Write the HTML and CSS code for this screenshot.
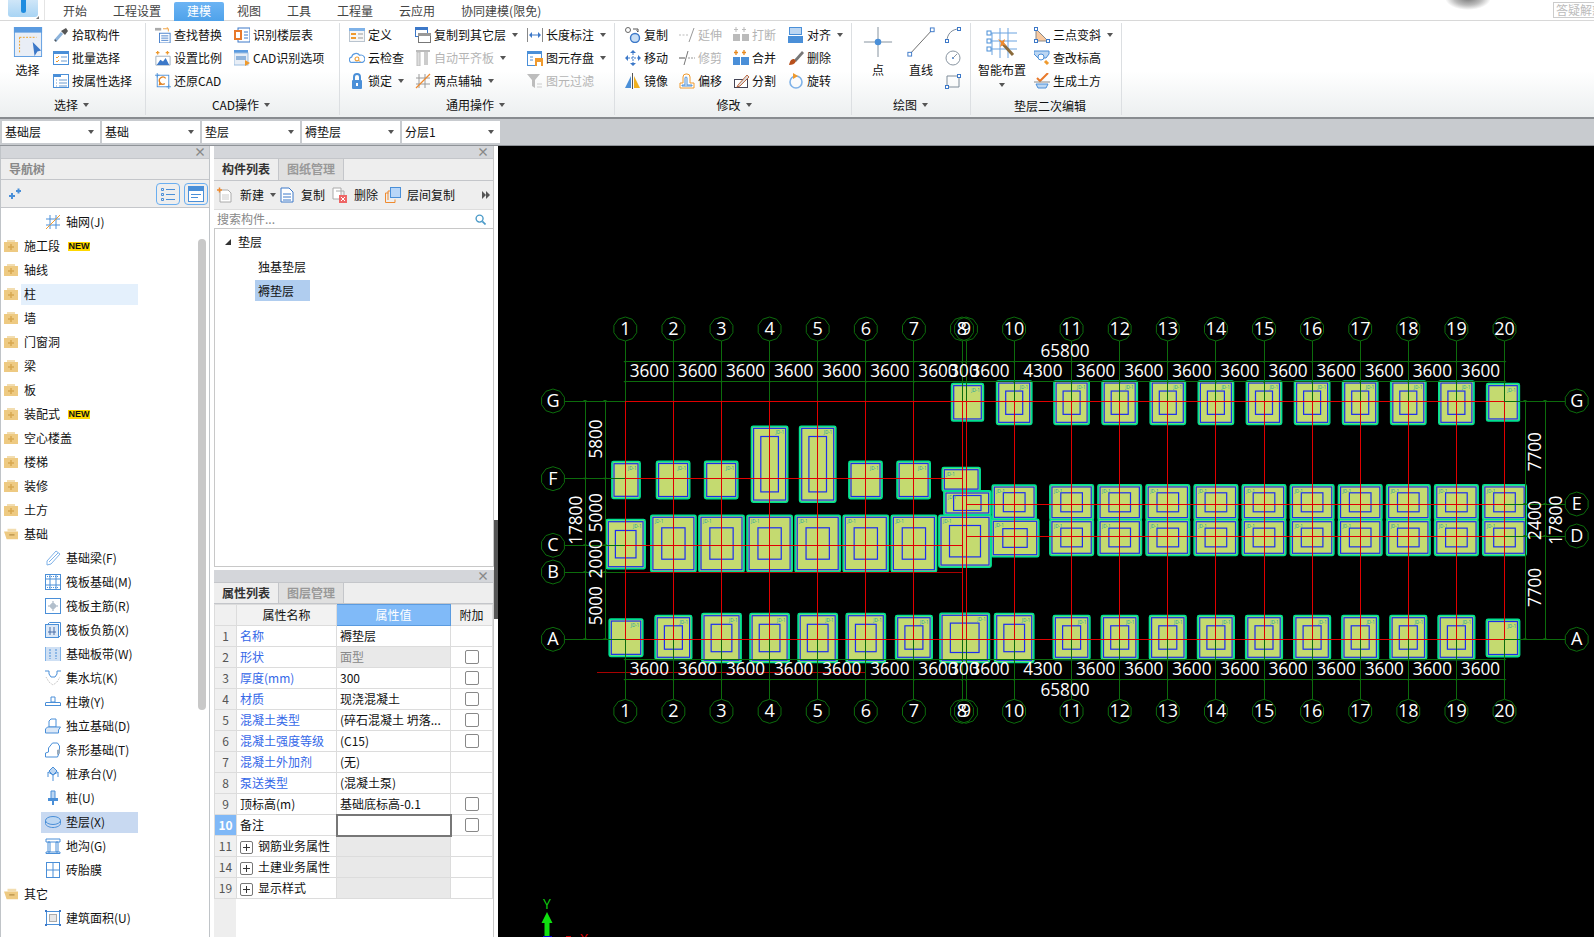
FILE: index.html
```html
<!DOCTYPE html>
<html lang="zh-CN">
<head>
<meta charset="utf-8">
<title>建模</title>
<link rel="stylesheet" href="styles.css">
</head>
<body>
<svg class="sprite" xmlns="http://www.w3.org/2000/svg">
  <symbol id="i-select" viewBox="0 0 30 32"><rect x=".5" y=".5" width="29" height="31" fill="#e9eef6" stroke="#5b9be0"/><rect width="30" height="6" fill="#5b9be0"/><path d="M6 11H24M6 11V27" fill="none" stroke="#f0a020" stroke-dasharray="2 1.5"/><path d="M20 16L29 25 25 26 22 31Z" fill="#3c78c8"/></symbol>
  <symbol id="i-pick" viewBox="0 0 16 16"><path d="M2 14L9 6" stroke="#8db4dc" stroke-width="3"/><path d="M2 14l1-1" stroke="#555" stroke-width="2"/><path d="M8 4l4 4 3-4-2-3z" fill="#555"/></symbol>
  <symbol id="i-batch" viewBox="0 0 16 16"><rect x=".5" y="1.5" width="15" height="13" fill="#fff" stroke="#4a8fd8"/><rect y="1" width="16" height="3" fill="#4a8fd8"/><path d="M3 7l1 1 2-2M3 11l1 1 2-2" fill="none" stroke="#ef9a2e"/><path d="M8 7h6M8 11h6" stroke="#6a9bd0"/></symbol>
  <symbol id="i-attr" viewBox="0 0 16 16"><rect x=".5" y="1.5" width="15" height="13" fill="#fff" stroke="#4a8fd8"/><rect y="1" width="8" height="3" fill="#4a8fd8"/><path d="M3 7h1M3 10h1M3 13h1M6 7h8M6 10h8M6 13h8" stroke="#6a9bd0"/></symbol>
  <symbol id="i-find" viewBox="0 0 18 18"><path d="M0 1h7v3H0z" fill="#aaa"/><path d="M9 2h6l-2-2m2 2v3" fill="none" stroke="#ef9a2e"/><rect x="5" y="7" width="12" height="11" fill="#fff" stroke="#3c78c8"/><path d="M7 10h8M7 12.5h8M7 15h8" stroke="#3c78c8"/></symbol>
  <symbol id="i-scale" viewBox="0 0 18 18"><path d="M1 3h4M3 1v4M12 3h4M14 1v4" stroke="#ef9a2e" stroke-width="1.5"/><path d="M1 7h16v10H1z" fill="#fff" stroke="#9ab"/><path d="M2 17L6 11 9 13 12 9 16 17z" fill="#3c78c8"/></symbol>
  <symbol id="i-restore" viewBox="0 0 18 18"><rect x="2.5" y="2.5" width="13" height="13" fill="#fff" stroke="#4a8fd8"/><path d="M0 2.5h5M13 15.5h5M2.5 0v5M15.5 13v5" stroke="#4a8fd8"/><path d="M12 6a4 4 0 1 0-1 6" fill="none" stroke="#e08020" stroke-width="1.5"/><path d="M5 10l3 3-4 1z" fill="#e08020"/></symbol>
  <symbol id="i-floor" viewBox="0 0 16 16"><rect x="4" y="1" width="12" height="14" fill="#fff" stroke="#3c78c8"/><path d="M10 5h4M10 8h4M10 11h4" stroke="#3c78c8"/><rect y="3" width="8" height="10" fill="#e8792b"/><rect x="2" y="5" width="4" height="6" fill="#fff"/></symbol>
  <symbol id="i-cadopt" viewBox="0 0 16 16"><rect width="14" height="3" fill="#5b9be0"/><rect y="3" width="14" height="12" fill="#e8eef6" stroke="#9bbde0"/><rect x="2" y="6" width="10" height="4" fill="#8fb4dc"/><path d="M11 10l5 3-5 3z" fill="#ef9a2e"/></symbol>
  <symbol id="i-def" viewBox="0 0 16 16"><rect x=".5" y="1.5" width="15" height="13" fill="#f6f6f6" stroke="#b9c4cf"/><rect y="1" width="16" height="3" fill="#7fb2e8"/><rect x="2" y="6" width="5" height="2" fill="#ef9a2e"/><rect x="2" y="10" width="5" height="2" fill="#ef9a2e"/><path d="M9 7h5M9 11h5" stroke="#999"/></symbol>
  <symbol id="i-cloud" viewBox="0 0 18 16"><path d="M4 13a3 3 0 0 1-1-6 5 5 0 0 1 9-2 4 4 0 0 1 3 8z" fill="#fff" stroke="#5b9be0" stroke-width="1.3"/><circle cx="9" cy="9" r="2.2" fill="none" stroke="#ef9a2e" stroke-width="1.2"/><path d="M11 11l2 1" stroke="#ef9a2e"/></symbol>
  <symbol id="i-lock" viewBox="0 0 16 16"><path d="M5 7V4a3 3 0 0 1 6 0v3" fill="none" stroke="#4a8fd8" stroke-width="2"/><rect x="3" y="7" width="10" height="9" rx="1" fill="#4a8fd8"/><rect x="7" y="10" width="2" height="3" fill="#fff"/></symbol>
  <symbol id="i-copyto" viewBox="0 0 16 16"><rect x=".5" y=".5" width="12" height="9" fill="#fff" stroke="#3c78c8"/><rect width="13" height="3" fill="#3c78c8"/><rect x="3.5" y="6.5" width="12" height="9" fill="#fff" stroke="#777"/><rect x="3" y="6" width="13" height="3" fill="#999"/></symbol>
  <symbol id="i-autoalign" viewBox="0 0 16 16"><path d="M1 1h14" stroke="#bbb" stroke-width="2"/><rect x="2" y="2" width="3" height="14" fill="#ddd" stroke="#bbb"/><rect x="9" y="2" width="4" height="13" fill="#ccc"/></symbol>
  <symbol id="i-2pt" viewBox="0 0 16 16"><path d="M4 1v14M10 1v14M1 5h14M1 11h14" stroke="#9a9a9a"/><path d="M1 15L15 1" stroke="#ef8a2e" stroke-width="1.3"/></symbol>
  <symbol id="i-dim" viewBox="0 0 16 16"><path d="M.5 1v14M15.5 1v14" stroke="#888"/><path d="M3 8h10" stroke="#3c78c8"/><path d="M2 8l3-3v6zM14 8l-3-3v6z" fill="#3c78c8"/></symbol>
  <symbol id="i-save" viewBox="0 0 16 16"><rect x=".5" y="1.5" width="14" height="14" fill="#fff" stroke="#4a8fd8"/><rect y="1" width="15" height="3" fill="#4a8fd8"/><path d="M3 7h3M3 10h3" stroke="#4a8fd8"/><rect x="8" y="8" width="8" height="8" fill="#ef9a2e"/><rect x="10" y="12" width="4" height="4" fill="#fff"/></symbol>
  <symbol id="i-filter" viewBox="0 0 16 16"><path d="M0 1h13L8 7v8L5 13V7z" fill="#bdbdbd"/><path d="M10 11h5M10 14h5" stroke="#ccc"/></symbol>
  <symbol id="i-copy" viewBox="0 0 16 16"><circle cx="3" cy="3" r="2.5" fill="#fff" stroke="#666"/><circle cx="10" cy="11" r="4.5" fill="#c8def5" stroke="#3c78c8" stroke-width="1.4"/><path d="M8 2h5v3M13 5l-1.500-1.500" fill="none" stroke="#555"/></symbol>
  <symbol id="i-extend" viewBox="0 0 16 16"><path d="M0 8h9" stroke="#bbb" stroke-dasharray="2 1.500"/><path d="M10 15L15 1" stroke="#999"/></symbol>
  <symbol id="i-break" viewBox="0 0 16 16"><path d="M3 0v5M1 2.500h4M11 0v5M9 2.500h4" stroke="#bbb"/><rect y="7" width="7" height="7" fill="#bbb"/><rect x="9" y="7" width="7" height="7" fill="#bbb"/></symbol>
  <symbol id="i-align" viewBox="0 0 16 16"><rect x="1.500" y=".5" width="12" height="7" fill="#bcd6f2" stroke="#4a8fd8"/><rect y="9" width="15" height="7" fill="#4a8fd8"/></symbol>
  <symbol id="i-move" viewBox="0 0 16 16"><path d="M8 0l3 3H5zM8 16l-3-3h6zM0 8l3-3v6zM16 8l-3 3V5z" fill="#3c78c8"/><path d="M8 3v10M3 8h10" stroke="#3c78c8" stroke-dasharray="2 1"/></symbol>
  <symbol id="i-trim" viewBox="0 0 16 16"><path d="M0 8h6" stroke="#555"/><path d="M9 8h7" stroke="#999" stroke-dasharray="2 1"/><path d="M5 15L9 1" stroke="#777"/></symbol>
  <symbol id="i-merge" viewBox="0 0 16 16"><path d="M3 0v5M1 2.500h4M11 0v5M9 2.500h4" stroke="#e88a20" stroke-width="1.300"/><rect y="7" width="7" height="8" fill="#4a8fd8"/><rect x="8" y="7" width="8" height="8" fill="#4a8fd8"/></symbol>
  <symbol id="i-del" viewBox="0 0 16 16"><path d="M6 10L14 1l2 2-8 9z" fill="#777"/><path d="M6 9c-3 0-4 2-5 6 3 0 6-1 7-4z" fill="#b8501c"/></symbol>
  <symbol id="i-mirror" viewBox="0 0 16 16"><path d="M6 3v12H0z" fill="#4a8fd8"/><path d="M9 3v12h6z" fill="#f0b020"/><path d="M7.500 0v16" stroke="#555"/></symbol>
  <symbol id="i-offset" viewBox="0 0 16 16"><path d="M1 15V10h3V4a3 3 0 0 1 3-3h1a3 3 0 0 1 3 3v6h4v5z" fill="#fff" stroke="#ef9a2e"/><path d="M3 13v-1h3V5a1 1 0 0 1 2 0v7h5v1z" fill="none" stroke="#4a8fd8"/></symbol>
  <symbol id="i-split" viewBox="0 0 16 16"><rect x="1.500" y="6.500" width="13" height="8" fill="#fff" stroke="#445"/><path d="M5 12L14 2l2 2-9 9-3 1z" fill="#ddd" stroke="#b04a1c" stroke-width=".8"/></symbol>
  <symbol id="i-rotate" viewBox="0 0 16 16"><circle cx="8" cy="9" r="6" fill="none" stroke="#7fb2e8" stroke-width="1.600"/><path d="M5 0l5 3-5 3z" fill="#ef9a2e"/></symbol>
  <symbol id="i-point" viewBox="0 0 30 32"><path d="M15 0v32M0 16h30" stroke="#7f8c99"/><circle cx="15" cy="16" r="3.500" fill="#4a8fd8"/></symbol>
  <symbol id="i-line" viewBox="0 0 30 32"><path d="M3 29L27 3" stroke="#666"/><rect x="1" y="27" width="4" height="4" fill="#fff" stroke="#3c78c8"/><rect x="25" y="1" width="4" height="4" fill="#fff" stroke="#3c78c8"/></symbol>
  <symbol id="i-arc" viewBox="0 0 16 16"><path d="M2 14C2 7 7 2 14 2" fill="none" stroke="#7f8c99"/><rect x=".5" y="12.500" width="3" height="3" fill="#fff" stroke="#3c78c8"/><rect x="12.500" y=".5" width="3" height="3" fill="#fff" stroke="#3c78c8"/></symbol>
  <symbol id="i-circle" viewBox="0 0 16 16"><circle cx="8" cy="8" r="7" fill="#fff" stroke="#8a96a2"/><circle cx="8" cy="8" r="1" fill="#3c78c8"/><path d="M8 8l4-4" stroke="#8a96a2"/></symbol>
  <symbol id="i-rect" viewBox="0 0 16 16"><path d="M2 3h12v11H2z" fill="none" stroke="#7f8c99"/><rect x=".5" y="12.500" width="3" height="3" fill="#fff" stroke="#3c78c8"/><rect x="12.500" y="1.500" width="3" height="3" fill="#fff" stroke="#3c78c8"/></symbol>
  <symbol id="i-smart" viewBox="0 0 32 32"><path d="M6 6v22M14 1v30M22 1v30M1 6h30M1 14h30M1 22h30" stroke="#6aa3e0"/><rect x="1" y="4" width="4" height="4" fill="#fff" stroke="#4a8fd8"/><rect x="1" y="12" width="4" height="4" fill="#fff" stroke="#4a8fd8"/><rect x="1" y="20" width="4" height="4" fill="#fff" stroke="#4a8fd8"/><path d="M16 16l11 12" stroke="#8a6a3a" stroke-width="3"/><path d="M12 12l4 2 3-2-1 4 3 3-4-1-3 2 1-4z" fill="#ef8a2e"/></symbol>
  <symbol id="i-3pt" viewBox="0 0 16 16"><path d="M2 2l12 12H2z" fill="#f8c9a0" stroke="#888"/><rect x=".5" y=".5" width="3" height="3" fill="#fff" stroke="#3c78c8"/><rect x=".5" y="12.500" width="3" height="3" fill="#fff" stroke="#3c78c8"/><rect x="12.500" y="12.500" width="3" height="3" fill="#fff" stroke="#3c78c8"/></symbol>
  <symbol id="i-elev" viewBox="0 0 16 16"><path d="M0 1h15v3l-3 4H4L0 4z" fill="#bcd6f2" stroke="#4a8fd8"/><circle cx="7" cy="7" r="3" fill="#fff" stroke="#4a8fd8"/><path d="M11 11l3 3" stroke="#ef9a2e" stroke-width="3"/></symbol>
  <symbol id="i-earth" viewBox="0 0 16 16"><path d="M3 5l3 3 8-8" fill="none" stroke="#e8792b" stroke-width="2"/><path d="M0 9h16" stroke="#888"/><path d="M2 11h12l-2 4H4z" fill="#bcd6f2" stroke="#4a8fd8"/></symbol>
  <symbol id="i-folder" viewBox="0 0 14 14"><path d="M3 1h8v2H3z" fill="#f2ddb0"/><rect y="3" width="14" height="10" fill="#eeca82"/><path d="M7 5v6M4 8h6" stroke="#d8a850" stroke-width="1.500"/></symbol>
  <symbol id="i-folder-open" viewBox="0 0 16 14"><path d="M4 1h10v3H4z" fill="#f2ddb0"/><path d="M0 4h16v9H3z" fill="#eeca82"/><path d="M6 8h6" stroke="#b9924a" stroke-width="1.500"/></symbol>
  <symbol id="t-grid" viewBox="0 0 16 16"><path d="M5 1v14M11 1v14M1 5h14M1 11h14" stroke="#4a8fd8"/><path d="M1 15L15 1" stroke="#ef9a2e"/></symbol>
  <symbol id="t-beam" viewBox="0 0 16 16"><path d="M2 11L11 1l4 3-9 10-4 1z" fill="#fff" stroke="#7fb2e8"/><path d="M4 12L13 3" stroke="#7fb2e8"/></symbol>
  <symbol id="t-raft" viewBox="0 0 16 16"><rect x=".5" y=".5" width="15" height="15" fill="#fff" stroke="#4a8fd8"/><path d="M.5 5h15M.5 11h15M5 .5v15M11 .5v15" stroke="#4a8fd8"/><path d="M2 2.500h12M2 13.500h12" stroke="#4a8fd8" stroke-dasharray="1 1"/></symbol>
  <symbol id="t-main" viewBox="0 0 16 16"><rect x=".5" y=".5" width="15" height="15" fill="#fff" stroke="#4a8fd8"/><path d="M8 3v10M3 8h10" stroke="#9ab"/><path d="M6 6h4v4H6z" fill="none" stroke="#9ab"/></symbol>
  <symbol id="t-neg" viewBox="0 0 16 16"><rect x=".5" y="2.500" width="13" height="13" fill="#dbe8f7" stroke="#4a8fd8"/><path d="M2.500 2.500l2-2h11v13l-2 2" fill="none" stroke="#4a8fd8"/><path d="M5 5v8M9 5v8M3 10h8" stroke="#4a6fa8"/></symbol>
  <symbol id="t-strip" viewBox="0 0 16 16"><rect y="1" width="16" height="14" fill="#cfe0f4"/><path d="M.5 1v14M15.500 1v14" stroke="#7fb2e8"/><path d="M5 3v10M11 3v10" stroke="#4a8fd8" stroke-dasharray="2 1"/></symbol>
  <symbol id="t-sump" viewBox="0 0 16 16"><path d="M0 1h4v3l2 3h4l2-3V1h4" fill="none" stroke="#4a8fd8"/><path d="M1 7l3 5 4 3 4-3 3-5" fill="none" stroke="#bbb" stroke-dasharray="1 1"/></symbol>
  <symbol id="t-pier" viewBox="0 0 16 16"><path d="M6 3h4v5H6z" fill="#fff" stroke="#4a8fd8"/><path d="M1 8.500h14M0 11.500h16" stroke="#4a8fd8"/><path d="M.5 8.500v3M15.500 8.500v3" stroke="#4a8fd8"/></symbol>
  <symbol id="t-iso" viewBox="0 0 16 16"><path d="M4 3l2-2h5v8H4z" fill="#fff" stroke="#4a8fd8"/><path d="M.5 15V11l2-2h13l-2 3v3z" fill="#dbe8f7" stroke="#4a8fd8"/></symbol>
  <symbol id="t-bar" viewBox="0 0 16 16"><path d="M.5 15v-4l3-1V6l4-5h5l2 3v6l-2 5z" fill="#fff" stroke="#4a8fd8"/><path d="M12 8l3-1v4l-3 2z" fill="#9ab"/></symbol>
  <symbol id="t-cap" viewBox="0 0 16 16"><path d="M8 1l4 4-4 4-4-4z" fill="#bcd6f2" stroke="#4a8fd8"/><path d="M3 6v5M13 6v5M8 9v6M3 6l5 3 5-3" fill="none" stroke="#4a8fd8"/></symbol>
  <symbol id="t-pile" viewBox="0 0 16 16"><path d="M6 1h4v8H6z" fill="#bcd6f2" stroke="#4a8fd8"/><path d="M3 8h10v3H3z" fill="#4a8fd8"/><path d="M8 11v4" stroke="#4a8fd8" stroke-width="2"/></symbol>
  <symbol id="t-cushion" viewBox="0 0 16 12"><ellipse cx="8" cy="4.500" rx="7.500" ry="4" fill="#bcd6f2" stroke="#4a8fd8"/><path d="M.5 4.500v3c0 2 3.500 4 7.500 4s7.500-2 7.500-4v-3" fill="none" stroke="#4a8fd8"/></symbol>
  <symbol id="t-trench" viewBox="0 0 16 16"><path d="M1 1h14v3H1zM3 4h2v10H3zM11 4h2v10h-2zM1 14h14v1.500H1z" fill="#fff" stroke="#4a8fd8"/></symbol>
  <symbol id="t-brick" viewBox="0 0 16 16"><rect x="1.500" y=".5" width="13" height="15" fill="#fff" stroke="#4a8fd8"/><path d="M8 .5v15M1.500 8h13" stroke="#4a8fd8"/></symbol>
  <symbol id="t-area" viewBox="0 0 16 16"><rect x="1.500" y="1.500" width="13" height="13" fill="#fff" stroke="#4a8fd8"/><rect x="4.500" y="4.500" width="7" height="7" fill="#e8e8e8" stroke="#aaa"/><rect width="2" height="2" fill="#3c78c8"/><rect x="14" width="2" height="2" fill="#3c78c8"/><rect y="14" width="2" height="2" fill="#3c78c8"/><rect x="14" y="14" width="2" height="2" fill="#3c78c8"/></symbol>
  <symbol id="b-spark" viewBox="0 0 14 12"><path d="M1 8h6M4 5v6M8 3h5M10.500 .5v5" stroke="#4a8fd8" stroke-width="2"/></symbol>
  <symbol id="b-list" viewBox="0 0 16 16"><path d="M1.500 2.500h2v2h-2zM1.500 7.500h2v2h-2zM1.500 12.500h2v2h-2z" fill="none" stroke="#4a8fd8"/><path d="M6 3.500h9M6 8.500h9M6 13.500h9" stroke="#4a8fd8"/></symbol>
  <symbol id="b-win" viewBox="0 0 16 16"><rect x=".5" y=".5" width="15" height="15" fill="#fff" stroke="#4a8fd8"/><rect width="16" height="5" fill="#4a8fd8"/><path d="M3 8.500h10M3 11.500h7" stroke="#4a8fd8"/></symbol>
  <symbol id="b-new" viewBox="0 0 16 16"><path d="M3 3h8l3 3v9H3z" fill="#fff" stroke="#aaa"/><path d="M5 8h7M5 10h7M5 12h7" stroke="#ccc"/><path d="M0 3h5M2.500 .5v5" stroke="#ef8a2e" stroke-width="1.500"/></symbol>
  <symbol id="b-copy" viewBox="0 0 14 16"><path d="M1 1h8l4 4v10H1z" fill="#fff" stroke="#3c78c8"/><path d="M3 7h8M3 10h8M3 13h8" stroke="#3c78c8"/></symbol>
  <symbol id="b-del" viewBox="0 0 16 16"><path d="M1 1h8v11H1z" fill="#fff" stroke="#aaa"/><path d="M4 4h8v6" fill="none" stroke="#aaa"/><rect x="7" y="8" width="8" height="8" fill="#e66"/><path d="M9 10l4 4m0-4l-4 4" stroke="#fff"/></symbol>
  <symbol id="b-floor" viewBox="0 0 16 16"><path d="M.5 15.500V6h3M.5 15.500H10v-3" fill="none" stroke="#ef8a2e"/><rect x="5.500" y=".5" width="10" height="10" fill="#b8d6f8" stroke="#4a8fd8"/><path d="M3 13V4h2" fill="none" stroke="#ef8a2e"/></symbol>
  <symbol id="b-search" viewBox="0 0 12 12"><circle cx="5" cy="5" r="3.800" fill="none" stroke="#4a9ac8" stroke-width="1.500"/><path d="M8 8l3.500 3.500" stroke="#4a9ac8" stroke-width="1.800"/></symbol>
</svg>

<div class="app">
  <header class="tabbar">
    <div class="logo-wrap"><div class="logo"><span class="drop"></span></div></div>
    <nav class="tabs">
      <span class="tab">开始</span><span class="tab">工程设置</span><span class="tab active">建模</span><span class="tab">视图</span><span class="tab">工具</span><span class="tab">工程量</span><span class="tab">云应用</span><span class="tab">协同建模(限免)</span>
    </nav>
    <div class="tab-shadow"></div>
    <div class="help">答疑解惑</div>
  </header>

  <div class="ribbon">
    <section class="grp g1">
      <div class="grp-body">
        <div class="big w51"><svg class="ic-big"><use href="#i-select"/></svg><span>选择</span></div>
        <div class="col">
          <div class="it"><svg class="ic"><use href="#i-pick"/></svg>拾取构件</div>
          <div class="it"><svg class="ic"><use href="#i-batch"/></svg>批量选择</div>
          <div class="it"><svg class="ic"><use href="#i-attr"/></svg>按属性选择</div>
        </div>
      </div>
      <div class="grp-label">选择<i class="caret"></i></div>
    </section>
    <section class="grp g2">
      <div class="grp-body">
        <div class="col w79">
          <div class="it"><svg class="ic"><use href="#i-find"/></svg>查找替换</div>
          <div class="it"><svg class="ic"><use href="#i-scale"/></svg>设置比例</div>
          <div class="it"><svg class="ic"><use href="#i-restore"/></svg>还原CAD</div>
        </div>
        <div class="col">
          <div class="it"><svg class="ic"><use href="#i-floor"/></svg>识别楼层表</div>
          <div class="it"><svg class="ic"><use href="#i-cadopt"/></svg>CAD识别选项</div>
        </div>
      </div>
      <div class="grp-label">CAD操作<i class="caret"></i></div>
    </section>
    <section class="grp g3">
      <div class="grp-body">
        <div class="col w66">
          <div class="it"><svg class="ic"><use href="#i-def"/></svg>定义</div>
          <div class="it"><svg class="ic"><use href="#i-cloud"/></svg>云检查</div>
          <div class="it"><svg class="ic"><use href="#i-lock"/></svg>锁定<i class="caret"></i></div>
        </div>
        <div class="col w112">
          <div class="it"><svg class="ic"><use href="#i-copyto"/></svg>复制到其它层<i class="caret"></i></div>
          <div class="it off"><svg class="ic"><use href="#i-autoalign"/></svg>自动平齐板<i class="caret"></i></div>
          <div class="it"><svg class="ic"><use href="#i-2pt"/></svg>两点辅轴<i class="caret"></i></div>
        </div>
        <div class="col">
          <div class="it"><svg class="ic"><use href="#i-dim"/></svg>长度标注<i class="caret"></i></div>
          <div class="it"><svg class="ic"><use href="#i-save"/></svg>图元存盘<i class="caret"></i></div>
          <div class="it off"><svg class="ic"><use href="#i-filter"/></svg>图元过滤</div>
        </div>
      </div>
      <div class="grp-label">通用操作<i class="caret"></i></div>
    </section>
    <section class="grp g4">
      <div class="grp-body">
        <div class="col w54">
          <div class="it"><svg class="ic"><use href="#i-copy"/></svg>复制</div>
          <div class="it"><svg class="ic"><use href="#i-move"/></svg>移动</div>
          <div class="it"><svg class="ic"><use href="#i-mirror"/></svg>镜像</div>
        </div>
        <div class="col w54">
          <div class="it off"><svg class="ic"><use href="#i-extend"/></svg>延伸</div>
          <div class="it off"><svg class="ic"><use href="#i-trim"/></svg>修剪</div>
          <div class="it"><svg class="ic"><use href="#i-offset"/></svg>偏移</div>
        </div>
        <div class="col w55">
          <div class="it off"><svg class="ic"><use href="#i-break"/></svg>打断</div>
          <div class="it"><svg class="ic"><use href="#i-merge"/></svg>合并</div>
          <div class="it"><svg class="ic"><use href="#i-split"/></svg>分割</div>
        </div>
        <div class="col">
          <div class="it"><svg class="ic"><use href="#i-align"/></svg>对齐<i class="caret"></i></div>
          <div class="it"><svg class="ic"><use href="#i-del"/></svg>删除</div>
          <div class="it"><svg class="ic"><use href="#i-rotate"/></svg>旋转</div>
        </div>
      </div>
      <div class="grp-label">修改<i class="caret"></i></div>
    </section>
    <section class="grp g5">
      <div class="grp-body">
        <div class="big w44"><svg class="ic-big"><use href="#i-point"/></svg><span>点</span></div>
        <div class="big w42"><svg class="ic-big"><use href="#i-line"/></svg><span>直线</span></div>
        <div class="col small">
          <div class="it"><svg class="ic"><use href="#i-arc"/></svg></div>
          <div class="it"><svg class="ic"><use href="#i-circle"/></svg></div>
          <div class="it"><svg class="ic"><use href="#i-rect"/></svg></div>
        </div>
      </div>
      <div class="grp-label">绘图<i class="caret"></i></div>
    </section>
    <section class="grp g6">
      <div class="grp-body">
        <div class="big w62"><svg class="ic-big ic-smart"><use href="#i-smart"/></svg><span>智能布置</span><i class="caret under"></i></div>
        <div class="col">
          <div class="it"><svg class="ic"><use href="#i-3pt"/></svg>三点变斜<i class="caret"></i></div>
          <div class="it"><svg class="ic"><use href="#i-elev"/></svg>查改标高</div>
          <div class="it"><svg class="ic"><use href="#i-earth"/></svg>生成土方</div>
        </div>
      </div>
      <div class="grp-label">垫层二次编辑</div>
    </section>
  </div>

  <div class="combobar">
    <div class="combo">基础层<i class="caret"></i></div>
    <div class="combo">基础<i class="caret"></i></div>
    <div class="combo">垫层<i class="caret"></i></div>
    <div class="combo">褥垫层<i class="caret"></i></div>
    <div class="combo">分层1<i class="caret"></i></div>
  </div>

  <main class="workspace">
    <aside class="nav">
      <div class="titlebar"><span class="close">×</span></div>
      <div class="nav-tab">导航树</div>
      <div class="nav-tools">
        <svg class="spark"><use href="#b-spark"/></svg>
        <span class="grow"></span>
        <span class="tbtn"><svg><use href="#b-list"/></svg></span>
        <span class="tbtn"><svg><use href="#b-win"/></svg></span>
      </div>
      <div class="tree">
        <div class="scroll-thumb"></div>
        <div class="leaf"><span class="node"><svg class="ic"><use href="#t-grid"/></svg>轴网(J)</span></div>
        <div class="branch"><svg class="fold"><use href="#i-folder"/></svg><span class="blabel">施工段<b class="new">NEW</b></span></div>
        <div class="branch"><svg class="fold"><use href="#i-folder"/></svg><span class="blabel">轴线</span></div>
        <div class="branch"><svg class="fold"><use href="#i-folder"/></svg><span class="blabel hover">柱</span></div>
        <div class="branch"><svg class="fold"><use href="#i-folder"/></svg><span class="blabel">墙</span></div>
        <div class="branch"><svg class="fold"><use href="#i-folder"/></svg><span class="blabel">门窗洞</span></div>
        <div class="branch"><svg class="fold"><use href="#i-folder"/></svg><span class="blabel">梁</span></div>
        <div class="branch"><svg class="fold"><use href="#i-folder"/></svg><span class="blabel">板</span></div>
        <div class="branch"><svg class="fold"><use href="#i-folder"/></svg><span class="blabel">装配式<b class="new">NEW</b></span></div>
        <div class="branch"><svg class="fold"><use href="#i-folder"/></svg><span class="blabel">空心楼盖</span></div>
        <div class="branch"><svg class="fold"><use href="#i-folder"/></svg><span class="blabel">楼梯</span></div>
        <div class="branch"><svg class="fold"><use href="#i-folder"/></svg><span class="blabel">装修</span></div>
        <div class="branch"><svg class="fold"><use href="#i-folder"/></svg><span class="blabel">土方</span></div>
        <div class="branch"><svg class="fold"><use href="#i-folder-open"/></svg><span class="blabel">基础</span></div>
        <div class="leaf"><span class="node"><svg class="ic"><use href="#t-beam"/></svg>基础梁(F)</span></div>
        <div class="leaf"><span class="node"><svg class="ic"><use href="#t-raft"/></svg>筏板基础(M)</span></div>
        <div class="leaf"><span class="node"><svg class="ic"><use href="#t-main"/></svg>筏板主筋(R)</span></div>
        <div class="leaf"><span class="node"><svg class="ic"><use href="#t-neg"/></svg>筏板负筋(X)</span></div>
        <div class="leaf"><span class="node"><svg class="ic"><use href="#t-strip"/></svg>基础板带(W)</span></div>
        <div class="leaf"><span class="node"><svg class="ic"><use href="#t-sump"/></svg>集水坑(K)</span></div>
        <div class="leaf"><span class="node"><svg class="ic"><use href="#t-pier"/></svg>柱墩(Y)</span></div>
        <div class="leaf"><span class="node"><svg class="ic"><use href="#t-iso"/></svg>独立基础(D)</span></div>
        <div class="leaf"><span class="node"><svg class="ic"><use href="#t-bar"/></svg>条形基础(T)</span></div>
        <div class="leaf"><span class="node"><svg class="ic"><use href="#t-cap"/></svg>桩承台(V)</span></div>
        <div class="leaf"><span class="node"><svg class="ic"><use href="#t-pile"/></svg>桩(U)</span></div>
        <div class="leaf"><span class="node current"><svg class="ic"><use href="#t-cushion"/></svg>垫层(X)</span></div>
        <div class="leaf"><span class="node"><svg class="ic"><use href="#t-trench"/></svg>地沟(G)</span></div>
        <div class="leaf"><span class="node"><svg class="ic"><use href="#t-brick"/></svg>砖胎膜</span></div>
        <div class="branch"><svg class="fold"><use href="#i-folder-open"/></svg><span class="blabel">其它</span></div>
        <div class="leaf"><span class="node"><svg class="ic"><use href="#t-area"/></svg>建筑面积(U)</span></div>
      </div>
    </aside>

    <div class="midcol">
      <section class="panel parts">
        <div class="titlebar"><span class="close">×</span></div>
        <div class="ptabs"><span class="ptab on">构件列表</span><span class="ptab">图纸管理</span></div>
        <div class="ptools">
          <svg class="pic"><use href="#b-new"/></svg><span class="pt m-new">新建</span><i class="caret"></i>
          <svg class="pic m-a"><use href="#b-copy"/></svg><span class="pt">复制</span>
          <svg class="pic m-b"><use href="#b-del"/></svg><span class="pt">删除</span>
          <svg class="pic m-b"><use href="#b-floor"/></svg><span class="pt">层间复制</span>
          <span class="grow"></span><span class="more"></span>
        </div>
        <div class="search"><span>搜索构件...</span><svg class="sic"><use href="#b-search"/></svg></div>
        <div class="plist">
          <div class="pgroup"><i class="tri"></i>垫层</div>
          <div class="pitem"><span>独基垫层</span></div>
          <div class="pitem"><span class="sel">褥垫层</span></div>
        </div>
      </section>
      <section class="panel props">
        <div class="titlebar"><span class="close">×</span></div>
        <div class="ptabs"><span class="ptab on">属性列表</span><span class="ptab">图层管理</span></div>
        <div class="tablewrap">
          <table class="ptable">
            <colgroup><col class="c1"><col class="c2"><col class="c3"><col class="c4"></colgroup>
            <tr class="head"><th class="num"></th><th>属性名称</th><th class="hval">属性值</th><th>附加</th></tr>
            <tr><td class="num">1</td><td class="link">名称</td><td>褥垫层</td><td></td></tr>
            <tr><td class="num">2</td><td class="link">形状</td><td class="dis">面型</td><td class="ck"><i class="box"></i></td></tr>
            <tr><td class="num">3</td><td class="link">厚度(mm)</td><td>300</td><td class="ck"><i class="box"></i></td></tr>
            <tr><td class="num">4</td><td class="link">材质</td><td>现浇混凝土</td><td class="ck"><i class="box"></i></td></tr>
            <tr><td class="num">5</td><td class="link">混凝土类型</td><td>(碎石混凝土 坍落...</td><td class="ck"><i class="box"></i></td></tr>
            <tr><td class="num">6</td><td class="link">混凝土强度等级</td><td>(C15)</td><td class="ck"><i class="box"></i></td></tr>
            <tr><td class="num">7</td><td class="link">混凝土外加剂</td><td>(无)</td><td></td></tr>
            <tr><td class="num">8</td><td class="link">泵送类型</td><td>(混凝土泵)</td><td></td></tr>
            <tr><td class="num">9</td><td>顶标高(m)</td><td>基础底标高-0.1</td><td class="ck"><i class="box"></i></td></tr>
            <tr><td class="num cur">10</td><td>备注</td><td class="edit"></td><td class="ck"><i class="box"></i></td></tr>
            <tr><td class="num">11</td><td><i class="plus"></i>钢筋业务属性</td><td class="gray"></td><td></td></tr>
            <tr><td class="num">14</td><td><i class="plus"></i>土建业务属性</td><td class="gray"></td><td></td></tr>
            <tr><td class="num">19</td><td><i class="plus"></i>显示样式</td><td class="gray"></td><td></td></tr>
          </table>
        </div>
      </section>
    </div>

    <div class="gutter"><span class="gutter-thumb"></span></div>

    <div class="canvas">
      <svg id="cad" class="cad" viewBox="498 145 1096 792" xmlns="http://www.w3.org/2000/svg"></svg>
    </div>
  </main>
</div>
<script src="cad.js"></script>
</body>
</html>
```

FILE: styles.css
```css
*{box-sizing:border-box}
html,body{margin:0;height:100%;overflow:hidden;background:#fff}
body{font:12px/16px "Noto Sans CJK SC","Noto Sans",sans-serif;color:#111}
.sprite{display:none}
.app{width:1594px;height:937px;display:flex;flex-direction:column;overflow:hidden}
svg{display:block;flex:none}
.grow{flex:1}

.tabbar{height:21px;flex:none;display:flex;background:#fff;border-bottom:1px solid #d8d8d8;position:relative}
.logo-wrap{width:50px;height:20px;padding-left:8px;position:relative}
.logo-wrap::before{content:"";position:absolute;left:44px;top:0;width:1px;height:20px;background:#e4e4e4}
.logo-wrap::after{content:"";position:absolute;left:36px;top:16px;width:0;height:0;border-left:3px solid transparent;border-bottom:3px solid #777}
.logo{width:30px;height:17px;background:linear-gradient(#cfe6f8,#a8d4f4);border-radius:0 0 3px 3px;display:flex;justify-content:center}
.drop{width:5px;height:13px;background:#1e8ce0;border-radius:0 0 3px 3px}
.tabs{display:flex;align-items:stretch}
.tab{padding:2px 13px 0;line-height:18px;color:#444}
.tab.active{background:linear-gradient(#6cb4f4,#4fa2ea);color:#fff;margin-top:2px;padding-top:0;border-radius:2px 2px 0 0;height:19px}
.tab-shadow{position:absolute;left:1445px;top:-14px;width:46px;height:24px;border-radius:50%;background:radial-gradient(closest-side,#777,#bbb 60%,#fff)}
.help{position:absolute;left:1553px;top:2px;width:41px;height:16px;border:1px solid #ccc;border-right:0;color:#bbb;line-height:14px;padding-left:2px;white-space:nowrap;overflow:hidden}

.ribbon{height:98px;flex:none;display:flex;padding-top:2px;background:linear-gradient(#fff 50px,#eceff0 96px);border-bottom:2px solid #888c90}
.grp{height:92px;border-right:1px solid #dcdfe2;flex:none}
.grp-body{height:70px;display:flex}
.grp-label{height:22px;display:flex;justify-content:center;align-items:center;gap:5px;padding-top:2px}
.g1{width:146px;padding-left:2px}
.g2{width:194px;padding-left:9px}
.g3{width:275px;padding-left:9px}
.g4{width:237px;padding-left:10px}
.g5{width:119px;padding-left:4px}
.g6{width:151px}
.g1 .grp-label{padding-right:4px}
.g2 .grp-label{padding-right:12px}
.g3 .grp-label{padding-right:12px}
.g4 .grp-label{padding-right:8px}
.g5 .grp-label{padding-right:5px}
.g6 .grp-label{padding:4px 0 0 8px}
.col{display:flex;flex-direction:column}
.w54{width:54px}.w55{width:55px}.w66{width:66px}.w79{width:79px}.w112{width:112px}
.it{height:23.3px;display:flex;align-items:center;gap:3px;white-space:nowrap}
.it .caret{margin-left:3px}
.it.off{color:#b4b4b4}
.ic{width:16px;height:16px}
.small{margin-left:3px}
.big{display:flex;flex-direction:column;align-items:center;padding-top:4px;flex:none}
.big span{margin-top:5px}
.w51{width:51px}.w44{width:44px}.w42{width:42px}.w62{width:62px}
.ic-big{width:30px;height:30px}
.ic-smart{width:32px;height:32px;margin-bottom:-2px}
.g6 .col{margin-left:1px}
.caret{display:inline-block;width:0;height:0;border:3px solid transparent;border-top:4px solid #555;border-bottom:0;flex:none}
.caret.under{margin-top:5px}

.combobar{height:26px;flex:none;display:flex;gap:2px;padding:2px 0 0 2px;background:#c8cbcf}
.combo{width:98px;height:22px;background:#fff;display:flex;align-items:center;justify-content:space-between;padding:0 6px 0 3px}

.workspace{flex:1;display:flex;min-height:0;border-top:1px solid #8f9398}
.nav{width:210px;flex:none;display:flex;flex-direction:column;border-left:1px solid #c0c4c8;border-right:1px solid #c0c4c8;background:#fff}
.titlebar{height:12px;flex:none;background:#d4d6da;position:relative;display:flex;justify-content:flex-end;padding-right:3px}
.close{font-size:12px;line-height:11px;color:#888;font-weight:700}
.panel .titlebar{padding-right:4px}
.nav-tab{height:22px;flex:none;background:#eee;border-top:1px solid #c4c6ca;border-bottom:1px solid #c4c6ca;padding-left:8px;line-height:20px;color:#888;font-weight:700}
.nav-tools{height:28px;flex:none;background:#eee;border-bottom:1px solid #c4c6ca;display:flex;align-items:center;gap:4px;padding:0 1px 0 7px}
.spark{width:14px;height:12px}
.tbtn{width:24px;height:22px;border:1px solid #6aaef0;border-radius:4px;display:flex;align-items:center;justify-content:center}
.tbtn svg{width:16px;height:16px}
.tree{flex:1;padding-top:2px;position:relative;overflow:hidden}
.scroll-thumb{position:absolute;left:197px;top:31px;width:8px;height:471px;background:#c8c8c8;border-radius:4px}
.branch{height:24px;display:flex;align-items:center;padding-left:3px}
.fold{width:14px;height:14px;margin-right:3px}
.branch .fold{flex:none}
.blabel{width:117px;height:21px;display:flex;align-items:center;padding-left:3px}
.blabel.hover{background:#e4f0fc}
.new{margin-left:8px;width:22px;height:9px;background:#ffd800;font:700 9px/9px "Liberation Sans",sans-serif;text-align:center;color:#111}
.leaf{height:24px;display:flex;align-items:center;padding-left:40px}
.node{width:97px;height:21px;display:flex;align-items:center;gap:5px;padding-left:4px;white-space:nowrap}
.node.current{background:#c8d9f1}

.midcol{width:280px;flex:none;margin-left:4px;display:flex;flex-direction:column}
.panel{border-right:1px solid #c8c8c8;display:flex;flex-direction:column}
.parts{height:421px;border-bottom:1px solid #c8c8c8}
.props{flex:1;margin-top:3px;min-height:0}
.ptabs{height:23px;flex:none;background:#eee;border-top:1px solid #c4c6ca;border-bottom:1px solid #c4c6ca;display:flex}
.props .ptabs{height:22px}
.ptab{width:65px;text-align:center;line-height:20px;background:#e0e0e0;color:#999;font-weight:700;border-right:1px solid #c4c6ca}
.ptab.on{background:#eee;color:#333}
.ptools{height:28px;flex:none;background:#eee;display:flex;align-items:center;padding:0 3px 0 3px}
.pic{width:16px;height:16px}
.pt{margin-left:6px;white-space:nowrap}
.m-new{margin-left:7px}
.ptools .caret{margin-left:6px}
.m-a{margin-left:3px}
.m-b{margin-left:7px}
.more{width:8px;height:8px;background:#555;clip-path:polygon(0 0,50% 50%,50% 0,100% 50%,50% 100%,50% 50%,0 100%)}
.search{height:20px;flex:none;display:flex;justify-content:space-between;align-items:center;padding:0 7px 0 3px;border-bottom:1px solid #c8c8c8;border-top:1px solid #ddd;color:#888;background:#fff}
.sic{width:11px;height:11px}
.plist{flex:1;padding-top:1px;border-left:1px solid #c8c8c8}
.pgroup{height:24px;padding-left:23px;display:flex;align-items:center;position:relative}
.tri{width:0;height:0;border-left:6px solid transparent;border-bottom:6px solid #333;margin-left:-13px;margin-right:7px}
.pitem{height:24px;padding-left:40px;display:flex;align-items:center}
.pitem span{height:21px;padding:0 8px 0 3px;line-height:21px;width:55px;white-space:nowrap}
.pitem .sel{background:#b0cdef}
.pitem span:not(.sel){width:auto}

.tablewrap{flex:1;background:linear-gradient(90deg,#eee 22px,#fff 22px)}
.ptable{border-collapse:collapse;table-layout:fixed;width:278px;background:#fff}
.c1{width:22px}.c2{width:100px}.c3{width:114px}.c4{width:42px}
.ptable th,.ptable td{height:21px;padding:0 3px;border:1px solid #dcdcdc;font-weight:400;white-space:nowrap;overflow:hidden;line-height:18px}
.ptable th{text-align:center;background:#f2f2f2}
.ptable .num{background:#f0f0f0;text-align:center;color:#555;padding:0;font-size:12px}
.ptable th.hval{background:#80baf8;color:#fff;border:1px solid #5a9be0}
.ptable .link{color:#3568e8}
.ptable .dis{background:#e9e9e9;color:#888}
.ptable .gray{background:#e9e9e9}
.ptable .num.cur{background:#7fb8f7;color:#fff;font-weight:700}
.ptable td.edit{border:2px solid #777}
.box{display:block;margin:0 auto;width:14px;height:14px;border:1px solid #888;border-radius:2px;background:#fff}
.plus{display:inline-block;width:13px;height:13px;border:1px solid #777;border-radius:2px;margin:0 5px 0 0;vertical-align:-3px;background:linear-gradient(#333,#333) center/7px 1px no-repeat,linear-gradient(#333,#333) center/1px 7px no-repeat}

.gutter{width:4px;flex:none;padding-top:374px}
.gutter-thumb{display:block;height:99px;background:#555}
.canvas{flex:1;background:#000;min-width:0}
.cad{width:1096px;height:792px}
.cad text{font-family:"Open Sans","DejaVu Sans",sans-serif;fill:#fff}
.cad .dim{font-size:18px}
.cad .lab{font-size:18px}
.cad .tag{font-size:4.500px;fill:#159fa8}
.cad .axisx{font-size:14px;fill:#e00000}
.cad .axisy{font-size:14px;fill:#0fd00f}
```

FILE: cad.js
```js
(function () {
  var NS = 'http://www.w3.org/2000/svg';
  var svg = document.getElementById('cad');
  var GREEN = '#0c6c0c', RED = '#e00000', DRED = '#a80000';

  function el(tag, attrs, text) {
    var n = document.createElementNS(NS, tag);
    for (var k in attrs) n.setAttribute(k, attrs[k]);
    if (text !== undefined) n.textContent = text;
    svg.appendChild(n);
    return n;
  }
  function snap(v) { return Math.floor(v) + 0.5; }
  function line(x1, y1, x2, y2, c) {
    el('line', { x1: x1, y1: y1, x2: x2, y2: y2, stroke: c || GREEN, 'stroke-width': 1 });
  }
  function hl(y, x1, x2, c) { line(x1, snap(y), x2, snap(y), c); }
  function vl(x, y1, y2, c) { line(snap(x), y1, snap(x), y2, c); }

  var cols = [null, 625.3, 673.4, 721.5, 769.6, 817.7, 865.8, 913.9, 962, 966, 1014.1,
    1071.6, 1119.7, 1167.8, 1215.9, 1264, 1312.1, 1360.2, 1408.3, 1456.4, 1504.5];
  var R = { G: 400, F: 477.7, E: 503, D: 535, C: 544.3, B: 571, A: 638.3 };

  function footing(cx, cy, w, h, iw, ih, left) {
    var x = cx - w / 2, y = cy - h / 2;
    el('rect', { x: x, y: y, width: w, height: h, rx: 1.5, fill: '#c4da70', stroke: '#00e090', 'stroke-width': 1.8 });
    el('rect', { x: x + 2, y: y + 2, width: w - 4, height: h - 4, fill: 'none', stroke: '#1a2ee8', 'stroke-width': 1.2 });
    if (iw) el('rect', { x: cx - iw / 2, y: cy - ih / 2, width: iw, height: ih, fill: 'none', stroke: '#1c2ef0', 'stroke-width': 1.2 });
    var tx = left ? x + 4 : x + w - 12;
    el('text', { x: tx, y: y + 8, 'class': 'tag' }, 'JD-1');
  }

  // Row G
  footing(967.5, 401.3, 31.6, 37.3);
  footing(1014.2, 401.7, 35, 43.3, 17, 23.3);
  for (var i = 11; i <= 19; i++) footing(cols[i], 401.7, 35, 43.3, 17, 23.3);
  footing(1503, 401.3, 32.5, 37.3);

  // Row F
  footing(626, 479, 28, 36.6);
  [2, 3, 6, 7].forEach(function (c) { footing(cols[c] - 0.3, 479, 33, 37); });
  [4, 5].forEach(function (c) { footing(cols[c], 463.2, 36, 75.7, 17.6, 55.4); });
  footing(961.2, 478.4, 37.7, 23.4, 0, 0, true);

  // Row C
  footing(625.7, 543.2, 38.7, 49, 20.6, 27.4);
  for (i = 2; i <= 7; i++) footing(cols[i], 542.5, 45, 56.4, 23.3, 31.4, true);

  // Rows E and D
  footing(967.3, 502, 46.7, 24, 27.4, 15, true);
  footing(965, 540.2, 52, 51.7, 31, 31.4, true);
  footing(1014.2, 501.2, 43.7, 34.3, 21.7, 19, true);
  footing(1015, 537, 47.4, 37.4, 24.4, 18.7, true);
  for (i = 11; i <= 20; i++) {
    footing(cols[i], 501.3, 43.3, 34.7, 21.6, 19, true);
    footing(cols[i], 536.5, 43.3, 35.6, 21.6, 18.7, true);
  }

  // Row A
  footing(626, 636.7, 33.4, 37.3);
  [2, 7, 11, 12, 13, 14, 15, 16, 17, 18, 19].forEach(function (c) {
    footing(cols[c], 636.5, 36.4, 43.6, 18, 23.4);
  });
  [3, 4, 5, 6].forEach(function (c) { footing(cols[c], 637, 39, 48.6, 20.7, 27.4); });
  footing(964.7, 636.8, 49.3, 49, 28.7, 29.4);
  footing(1014.2, 637, 39, 48.6, 20.7, 27.4);
  footing(1503, 637, 33, 37);

  // Red axes
  hl(R.G, 625, 1505, RED);
  hl(R.F, 625, 962, RED);
  hl(R.C, 625, 962, RED);
  hl(R.B, 625, 962, DRED);
  hl(R.E, 966, 1505, RED);
  hl(R.D, 966, 1505, RED);
  hl(R.A, 625, 1505, RED);
  hl(671, 597, 866, DRED);

  // Green axis extensions and dim lines
  hl(360, 625, 1505); hl(380, 625, 1505);
  hl(658, 625, 1505); hl(678, 625, 1505);
  vl(585, 400, 638); vl(605, 400, 638);
  vl(1525, 400, 638); vl(1545, 400, 638);

  var BASE = 5.8;
  function polygon(cx, cy, r) {
    var p = [];
    for (var k = 0; k < 10; k++) {
      var a = -Math.PI / 2 + k * Math.PI / 5;
      p.push((cx + r * Math.cos(a)).toFixed(1) + ',' + (cy + r * Math.sin(a)).toFixed(1));
    }
    el('polygon', { points: p.join(' '), fill: 'none', stroke: GREEN, 'stroke-width': 1 });
  }
  function label(x, y, t) {
    el('text', { x: x, y: y + BASE, 'text-anchor': 'middle', 'class': 'lab' }, t);
  }
  function tick(x, y) {
    el('path', { d: 'M' + x + ' ' + y + 'l-2-2h4z', fill: GREEN });
  }

  for (i = 1; i <= 20; i++) {
    var x = cols[i];
    vl(x, 340, 400);
    vl(x, 400, 638, RED);
    vl(x, 638, 698);
    polygon(x, 328, 12);
    polygon(x, 710.3, 12);
    tick(x, 362); tick(x, 382);
    tick(x, 660); tick(x, 680);
  }
  for (i = 1; i <= 20; i++) {
    label(cols[i], 328, String(i));
    label(cols[i], 710.3, String(i));
  }

  // Row bubbles
  [['G', R.G], ['F', R.F], ['C', R.C], ['B', R.B], ['A', R.A]].forEach(function (r) {
    hl(r[1], 565, 625);
    polygon(553, r[1], 12);
    label(553, r[1], r[0]);
    tick(585, r[1] + 1); tick(605, r[1] + 1);
  });
  [['G', R.G], ['E', R.E], ['D', R.D], ['A', R.A]].forEach(function (r) {
    hl(r[1], 1504, 1565);
    polygon(1576.7, r[1], 12);
    label(1576.7, r[1], r[0]);
    tick(1525, r[1] + 1); tick(1545, r[1] + 1);
  });

  // Dimensions
  var spans = [];
  for (i = 1; i < 20; i++) {
    var t = i === 8 ? '300' : i === 10 ? '4300' : '3600';
    spans.push([(cols[i] + cols[i + 1]) / 2, t]);
  }
  function dimText(x, y, t) {
    el('text', {
      x: x, y: y + BASE, 'text-anchor': 'middle', 'class': 'dim',
      textLength: t.length * 9.8, lengthAdjust: 'spacingAndGlyphs'
    }, t);
  }
  function vText(x, y, t) {
    el('text', {
      transform: 'translate(' + x + ' ' + y + ') rotate(-90)', y: 6.5,
      'text-anchor': 'middle', 'class': 'dim',
      textLength: t.length * 9.8, lengthAdjust: 'spacingAndGlyphs'
    }, t);
  }
  spans.forEach(function (s) {
    dimText(s[0], 370, s[1]);
    dimText(s[0], 668, s[1]);
  });
  dimText(1065, 350, '65800');
  dimText(1065, 688.7, '65800');

  vText(595.5, 438, '5800');
  vText(595.5, 511.7, '5000');
  vText(595.5, 557.7, '2000');
  vText(595.5, 604.7, '5000');
  vText(575.7, 519.3, '17800');
  vText(1534.7, 450.7, '7700');
  vText(1534.7, 519.3, '2400');
  vText(1534.7, 586.5, '7700');
  vText(1555, 519.3, '17800');

  // UCS marker
  el('text', { x: 547, y: 908, 'text-anchor': 'middle', 'class': 'axisy' }, 'Y');
  el('path', { d: 'M547 911l5.500 11h-3v13h-5v-13h-3z', fill: '#10e010' });
  el('rect', { x: 543, y: 935, width: 9, height: 2, fill: '#0000d0' });
  el('path', { d: 'M566 935h5v2h-5z', fill: '#d00000' });
  el('text', { x: 584, y: 943, 'text-anchor': 'middle', 'class': 'axisx' }, 'X');
})();
```
